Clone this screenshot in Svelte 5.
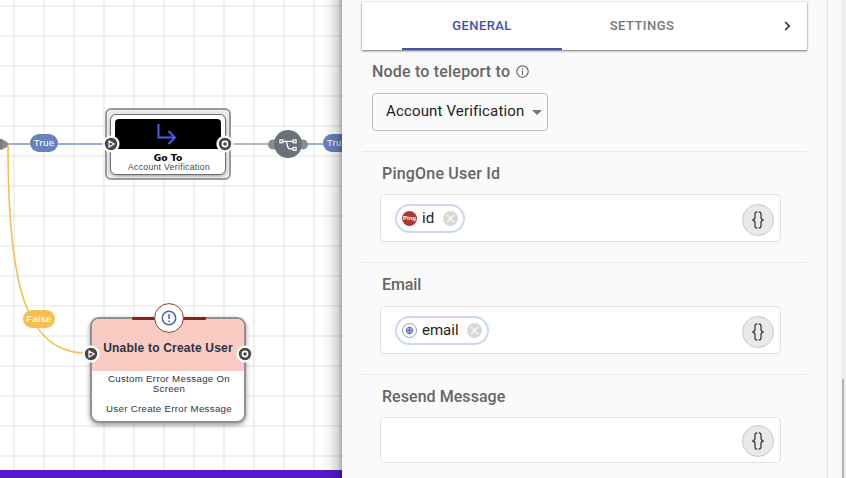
<script>
  const fields = [
    { label: 'PingOne User Id', spacing: 0.2, chip: { text: 'id', icon: 'ping', width: 70 }, gap: 42, box: 48, after: 20, tone: '#e8e8e8', drop: 2 },
    { label: 'Email', spacing: -0.1, chip: { text: 'email', icon: 'globe', width: 94 }, gap: 43, box: 48, after: 20, tone: '#e8e8f4', drop: 2 },
    { label: 'Resend Message', spacing: 0.05, chip: null, gap: 42, box: 46, after: 15, tone: '#e8e8f4', drop: 1 }
  ];
</script>

{#snippet port(kind)}
  <svg class="port {kind}" width="18" height="18" viewBox="0 0 18 18">
    <circle cx="9" cy="9" r="8.600" fill="#fff" />
    <circle cx="9" cy="9" r="6.200" fill="#484848" />
    {#if kind === 'in'}
      <path d="M7 5.900v6.200L12.200 9z" fill="#484848" stroke="#fff" stroke-width="1.200" stroke-linejoin="round" />
    {:else}
      <circle cx="9" cy="9" r="2.600" fill="#484848" stroke="#fff" stroke-width="1.600" />
    {/if}
  </svg>
{/snippet}

<div class="app">
  <main class="canvas">
    <svg class="edges" width="342" height="470" viewBox="0 0 342 470" fill="none">
      <path d="M4 144H108" stroke="#7793ce" stroke-width="1.700" />
      <path d="M228 144H272" stroke="#a0a0a0" stroke-width="1.700" />
      <path d="M304 144H342" stroke="#7793ce" stroke-width="1.700" />
      <path d="M8 144C8 280 24 351 84 353" stroke="#f4c04d" stroke-width="1.600" />
      <path d="M0 139C5 140 8 142 8 144.500S5 149 0 149.500Z" fill="#8b8b8b" />
      <path d="M0 139H2.500V149.500H0Z" fill="#777d82" />
      <circle cx="273" cy="144.500" r="5" fill="#8b8b8b" />
      <circle cx="303" cy="144.500" r="5" fill="#8b8b8b" />
      <circle cx="288" cy="144" r="14" fill="#68717a" />
      <g stroke="#fff" stroke-width="1.200">
        <path d="M283 141.300H293M285.300 141.300C288 141.300 286.500 148.900 289.500 148.900H293" />
        <rect x="279.900" y="139.900" width="2.900" height="2.900" />
        <rect x="293.200" y="139.900" width="2.900" height="2.900" />
        <rect x="293.200" y="147.400" width="2.900" height="2.900" />
      </g>
    </svg>
    <span class="tag true first">True</span>
    <span class="tag true second">True</span>
    <span class="tag false">False</span>

    <article class="goto">
      <div class="goto-card">
        <div class="goto-head">
          <svg width="22" height="24" viewBox="0 0 22 24" fill="none" stroke="#4b5fe6" stroke-width="2">
            <path d="M2.500 2V15.500H18.500M12.500 9L19 15.500L12.500 22" />
          </svg>
        </div>
        <b>Go To</b>
        <span>Account Verification</span>
      </div>
      {@render port('in')}
      {@render port('out')}
    </article>

    <article class="error">
      <div class="error-head">Unable to Create User</div>
      <p>Custom Error Message On<br />Screen</p>
      <p class="last">User Create Error Message</p>
      <i class="bar"></i>
      <svg class="alert" width="30" height="30" viewBox="0 0 30 30" fill="none">
        <circle cx="15" cy="15" r="14.400" fill="#fff" stroke="#963a30" />
        <circle cx="15" cy="15" r="6.700" stroke="#4f63ae" stroke-width="1.500" />
        <path d="M15 11V16M15 17.600V19" stroke="#4f63ae" stroke-width="1.500" />
      </svg>
      {@render port('in')}
      {@render port('out')}
    </article>
    <footer></footer>
    <div class="shade"></div>
  </main>

  <aside>
    <div class="content">
      <nav>
        <div class="tab active">GENERAL</div>
        <div class="tab settings">SETTINGS</div>
        <svg width="8" height="12" viewBox="0 0 8 12" fill="none" stroke="#333" stroke-width="1.700"><path d="M1.200 2L5.200 6L1.200 10" /></svg>
      </nav>
      <div class="teleport">
        <div class="title">
          <span>Node to teleport to</span>
          <svg width="13" height="13" viewBox="0 0 13 13" fill="none" stroke="#555" stroke-width="1.050">
            <circle cx="6.500" cy="6.500" r="5.700" /><path d="M6.500 5.800V9.700M6.500 3.300V4.500" />
          </svg>
        </div>
        <div class="select">
          <span>Account Verification</span>
          <svg width="10" height="5" viewBox="0 0 10 5"><path d="M0 0H10L5 5Z" fill="#757575" /></svg>
        </div>
      </div>
      {#each fields as f}
        <section style="border-color:{f.tone};padding-bottom:{f.after}px">
          <h3 style="height:{f.gap}px;letter-spacing:{f.spacing}px">{f.label}</h3>
          <div class="box" style="height:{f.box}px">
            {#if f.chip}
              <div class="chip" style="width:{f.chip.width}px">
                {#if f.chip.icon === 'ping'}
                  <span class="ping">Ping</span>
                {:else}
                  <svg width="15" height="15" viewBox="0 0 15 15" fill="none" stroke="#4258ae">
                    <circle cx="7.500" cy="7.500" r="7" stroke="#7e93cc" stroke-width=".9" />
                    <circle cx="7.500" cy="7.500" r="3.300" fill="#dbe1f5" stroke-width=".8" />
                    <path d="M4.200 7.500H10.800M7.500 4.200V10.800" stroke-width=".8" />
                    <ellipse cx="7.500" cy="7.500" rx="1.600" ry="3.300" stroke-width=".5" />
                  </svg>
                {/if}
                <span class="name">{f.chip.text}</span>
                <svg class="remove" width="15" height="15" viewBox="0 0 15 15">
                  <circle cx="7.500" cy="7.500" r="7.500" fill="#d8d8d8" />
                  <path d="M3.900 3.900L11.100 11.100M11.100 3.900L3.900 11.100" stroke="#fff" stroke-width="1.100" />
                </svg>
              </div>
            {/if}
            <button style="margin-top:{f.drop * 2}px" aria-label="Insert variable">
              <svg width="12" height="18" viewBox="0 0 12 18" fill="none" stroke="#444" stroke-width="1.350">
                <path d="M5.300 1H4.900Q3 1 3 3V6.600Q3 8.500 .4 9Q3 9.500 3 11.400V15Q3 17 4.900 17H5.300" />
                <path d="M6.700 1H7.100Q9 1 9 3V6.600Q9 8.500 11.600 9Q9 9.500 9 11.400V15Q9 17 7.100 17H6.700" />
              </svg>
            </button>
          </div>
        </section>
      {/each}
    </div>
    <div class="gutter"></div>
    <div class="track"><div class="thumb"></div></div>
  </aside>
</div>

<style>
  * { box-sizing: border-box; }
  .app { display: flex; width: 846px; height: 478px; overflow: hidden; font-family: Roboto, sans-serif; }
  .app svg { display: block; flex: none; }
  .canvas {
    position: relative; width: 342px; height: 478px; overflow: hidden; flex: none; background-color: #fff;
    background-image: linear-gradient(90deg, rgba(0,0,0,.055) 2px, transparent 2px), linear-gradient(rgba(0,0,0,.055) 2px, transparent 2px);
    background-size: 30px 30px; background-position: 13px 5px;
  }
  .edges { position: absolute; left: 0; top: 0; }
  .tag { position: absolute; height: 18px; border-radius: 9px; color: #fff; font: 9.8px/18px "Liberation Sans", sans-serif; text-align: center; letter-spacing: .2px; }
  .true { width: 28px; top: 134px; background: #6782bc; }
  .first { left: 30px; }
  .second { left: 323px; }
  .false { width: 32px; left: 23px; top: 310px; background: #f4c04d; letter-spacing: .3px; }
  .goto { position: absolute; left: 105px; top: 108px; width: 126px; height: 72px; padding: 4px 3px; border: 2px solid #9a9a9a; border-radius: 6px; background: #ececec; }
  .goto-card { display: flex; flex-direction: column; align-items: center; width: 116px; height: 61px; padding-top: 4px; border: 1px solid #6d6d72; border-radius: 6px; background: #fff; box-shadow: 0 1px 3px #0005; }
  .goto-head { display: flex; flex: none; width: 106px; height: 30px; margin-left: -1px; padding: 3px 0 0 41px; border-radius: 4px 4px 0 0; background: #000; }
  .goto b { font: bold 9.2px/10px "DejaVu Sans", sans-serif; margin-top: 4px; color: #000; }
  .goto span { margin-left: 2px; font: 8.6px/9px "Liberation Sans", sans-serif; letter-spacing: .33px; color: #444; white-space: nowrap; }
  .port { position: absolute; }
  .goto .port { top: 25px; }
  .goto .in { left: -5.300px; }
  .goto .out { right: -5.300px; }
  .error { position: absolute; left: 90px; top: 317px; width: 156px; height: 106px; border: 2px solid #919095; border-radius: 9px; background: #fff; box-shadow: 0 2px 5px #0006; font-family: "Liberation Sans", sans-serif; color: #2c3442; text-align: center; }
  .error-head { height: 52px; padding-top: 19px; border-radius: 7px 7px 0 0; background: #f8cbc3; font: bold 12px/20px "Liberation Sans", sans-serif; letter-spacing: .2px; white-space: nowrap; }
  .error p { margin: 3px 0 0; padding-left: 2px; font-size: 9.7px; line-height: 10px; letter-spacing: .3px; }
  .error .last { margin-top: 10px; }
  .bar { position: absolute; left: 40px; top: -2px; width: 74px; height: 3px; border-radius: 1px; background: #872413; }
  .alert { position: absolute; left: 62px; top: -16px; }
  .error .port { top: 26px; }
  .error .in { left: -10px; }
  .error .out { right: -10px; }
  footer { position: absolute; left: 0; bottom: 0; width: 342px; height: 8px; background: #5419ce; }
  .shade { position: absolute; right: 0; top: 0; width: 20px; height: 478px; background: linear-gradient(90deg, transparent, #0000000d 40%, #00000026 75%, #00000052); }
  aside { display: flex; width: 504px; background: #fafafa; }
  .content { width: 486px; padding: 2px 20px 0 20px; border-right: 1px solid #e2e2e2; }
  nav { display: flex; align-items: center; height: 48px; padding-left: 40px; background: #fff; box-shadow: 0 1px 2px #0008, 0 0 1px #0003; }
  .tab { width: 160px; height: 48px; font-size: 13px; font-weight: 500; line-height: 47px; text-align: center; letter-spacing: .4px; color: #777; }
  .settings { letter-spacing: .45px; }
  .active { color: #3f51b5; border-bottom: 2px solid #3f51b5; }
  nav svg { margin-left: 62px; }
  .teleport { height: 101px; padding: 11px 10px 0; }
  .title { display: flex; align-items: center; gap: 6px; height: 21px; font-size: 16px; font-weight: 500; color: #666; letter-spacing: .2px; }
  .select { display: flex; align-items: center; justify-content: space-between; width: 176px; height: 38px; margin-top: 11px; padding: 0 5px 2px 13px; border: 1px solid #bbb; border-radius: 4px; font-size: 15px; color: #222; letter-spacing: .15px; white-space: nowrap; }
  .select svg { margin-top: 2px; }
  section { width: 445px; padding: 0 26px 0 18px; border-top: 1px solid; }
  h3 { margin: 0; padding: 12px 0 0 2px; font-size: 16px; font-weight: 500; line-height: 20px; color: #666; }
  .box { display: flex; align-items: center; width: 401px; padding: 0 6px 0 14px; border: 1px solid #e0e0e0; border-radius: 5px; background: #fff; }
  .chip { display: flex; align-items: center; height: 29px; padding-left: 5px; padding-right: 5px; border: 2px solid #cbdaf0; border-radius: 15px; font-size: 15px; color: #222; }
  .name { margin-left: 5px; margin-top: -1px; }
  .remove { margin-left: auto; }
  .ping { width: 15px; height: 15px; border-radius: 50%; background: #a93a2d; color: #fff; font: bold 6px/15px "Liberation Sans", sans-serif; text-align: center; }
  button { display: flex; align-items: center; justify-content: center; width: 32px; height: 32px; margin-left: auto; padding: 0; border: 1px solid #cfc6c9; border-radius: 50%; background: #e9e9e9; }
  .gutter { width: 13px; }
  .track { width: 5px; padding: 379px 0 0 1px; background: #ededed; }
  .thumb { width: 2px; height: 99px; border-radius: 1px 1px 0 0; background: #b3b3b3; }
</style>
